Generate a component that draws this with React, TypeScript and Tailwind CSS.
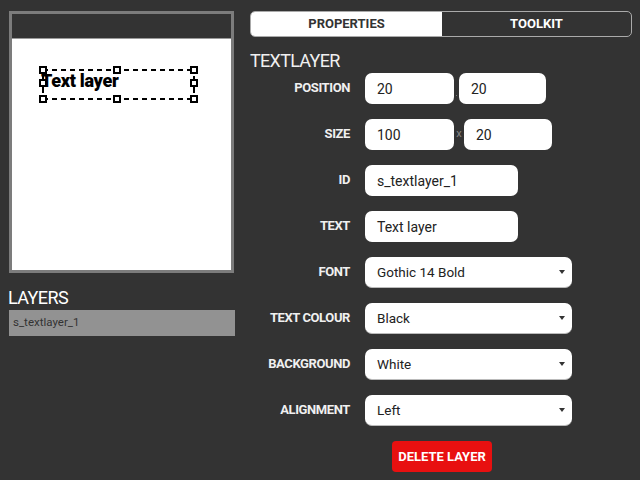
import type { ReactNode } from "react";

const FONT = "font-['Roboto','Liberation_Sans',sans-serif]";

function Handle({ className }: { className: string }) {
  return <div className={`absolute h-[8px] w-[8px] border-2 border-black bg-white ${className}`} />;
}

function Row({ label, children }: { label: string; children: ReactNode }) {
  return (
    <div className="flex h-[31px] items-start">
      <div className="w-[100px] shrink-0 pt-[7px] text-right text-[13px] font-bold leading-[16px] tracking-[-0.4px] text-[#f0f0f0]">
        {label}
      </div>
      <div className="ml-[15px] flex items-center">{children}</div>
    </div>
  );
}

function Field({ value, width }: { value: string; width: string }) {
  return (
    <div className={`flex h-[31px] items-center rounded-[7px] bg-white pl-[12px] pt-[1px] text-[14px] text-[#222] ${width}`}>
      {value}
    </div>
  );
}

function Select({ value }: { value: string }) {
  return (
    <div className="flex h-[31px] w-[207px] items-center justify-between rounded-[7px] border-b border-[#bbb] bg-white pl-[12px] pr-[6px] pt-[1px] text-[13.5px] text-[#222]">
      <span>{value}</span>
      <svg width="6" height="4" viewBox="0 0 6 4" className="mb-[2px] mr-[1px]">
        <path d="M0 0h6L3 4z" fill="#333" />
      </svg>
    </div>
  );
}

export default function App() {
  return (
    <div className={`flex h-[480px] w-[640px] overflow-hidden bg-[#333333] ${FONT}`}>
      <div className="ml-[9px] mt-[11px] w-[226px] shrink-0">
        <div className="relative h-[262px] w-[225px] border-[3px] border-[#7c7c7c] bg-white">
          <div className="h-[25px] border-b border-[#999] bg-[#333333]" />
          <div className="absolute left-[27px] top-[52px] h-[37px] w-[159px]">
            <svg width="159" height="37" className="absolute left-0 top-0">
              <path d="M4 4H155M4 33H155" stroke="#000" strokeWidth="2" strokeDasharray="5 4" fill="none" />
              <path d="M4 10V27M155 10V27" stroke="#000" strokeWidth="2" fill="none" />
            </svg>
            <div className="absolute left-[2px] top-[4px] text-[18px] font-black leading-[22px] tracking-[-0.3px] text-black">
              Text layer
            </div>
            <Handle className="left-0 top-0" />
            <Handle className="left-[74px] top-0" />
            <Handle className="right-0 top-0" />
            <Handle className="left-0 top-[13px]" />
            <Handle className="right-0 top-[13px]" />
            <Handle className="bottom-0 left-0" />
            <Handle className="bottom-0 left-[74px]" />
            <Handle className="bottom-0 right-0" />
          </div>
        </div>
        <div className="ml-[-1px] mt-[15px] text-[18px] leading-[20px] tracking-[-0.6px] text-white">LAYERS</div>
        <div className="mt-[2px] flex h-[26px] w-[226px] items-center bg-[#929292] pl-[4px] text-[11.5px] text-[#333]">
          s_textlayer_1
        </div>
      </div>

      <div className="ml-[15px] mt-[11px] w-[382px] shrink-0">
        <div className="flex h-[26px] overflow-hidden rounded-[5px] border border-[#aaa] text-[13px] font-bold">
          <div className="flex w-[191px] items-center justify-center bg-white text-[#333]">PROPERTIES</div>
          <div className="flex flex-1 items-center justify-center text-white">TOOLKIT</div>
        </div>
        <div className="mt-[13px] h-[23px] text-[18px] leading-[22px] tracking-[-0.7px] text-[#f0f0f0]">TEXTLAYER</div>
        <div className="flex flex-col gap-[15px]">
          <Row label="POSITION">
            <Field value="20" width="w-[89px]" />
            <div className="flex h-[31px] w-[5px] items-end justify-center pb-[8px]">
              <div className="h-[1px] w-[1px] bg-[#777]" />
            </div>
            <Field value="20" width="w-[87px]" />
          </Row>
          <Row label="SIZE">
            <Field value="100" width="w-[89px]" />
            <div className="flex w-[10px] justify-center text-[11px] text-[#888]">x</div>
            <Field value="20" width="w-[88px]" />
          </Row>
          <Row label="ID">
            <Field value="s_textlayer_1" width="w-[153px]" />
          </Row>
          <Row label="TEXT">
            <Field value="Text layer" width="w-[153px]" />
          </Row>
          <Row label="FONT">
            <Select value="Gothic 14 Bold" />
          </Row>
          <Row label="TEXT COLOUR">
            <Select value="Black" />
          </Row>
          <Row label="BACKGROUND">
            <Select value="White" />
          </Row>
          <Row label="ALIGNMENT">
            <Select value="Left" />
          </Row>
        </div>
        <div className="ml-[142px] mt-[15px] flex h-[31px] w-[100px] items-center justify-center rounded-[4px] bg-[#e81010] text-[13px] font-bold text-white">
          DELETE LAYER
        </div>
      </div>
    </div>
  );
}
